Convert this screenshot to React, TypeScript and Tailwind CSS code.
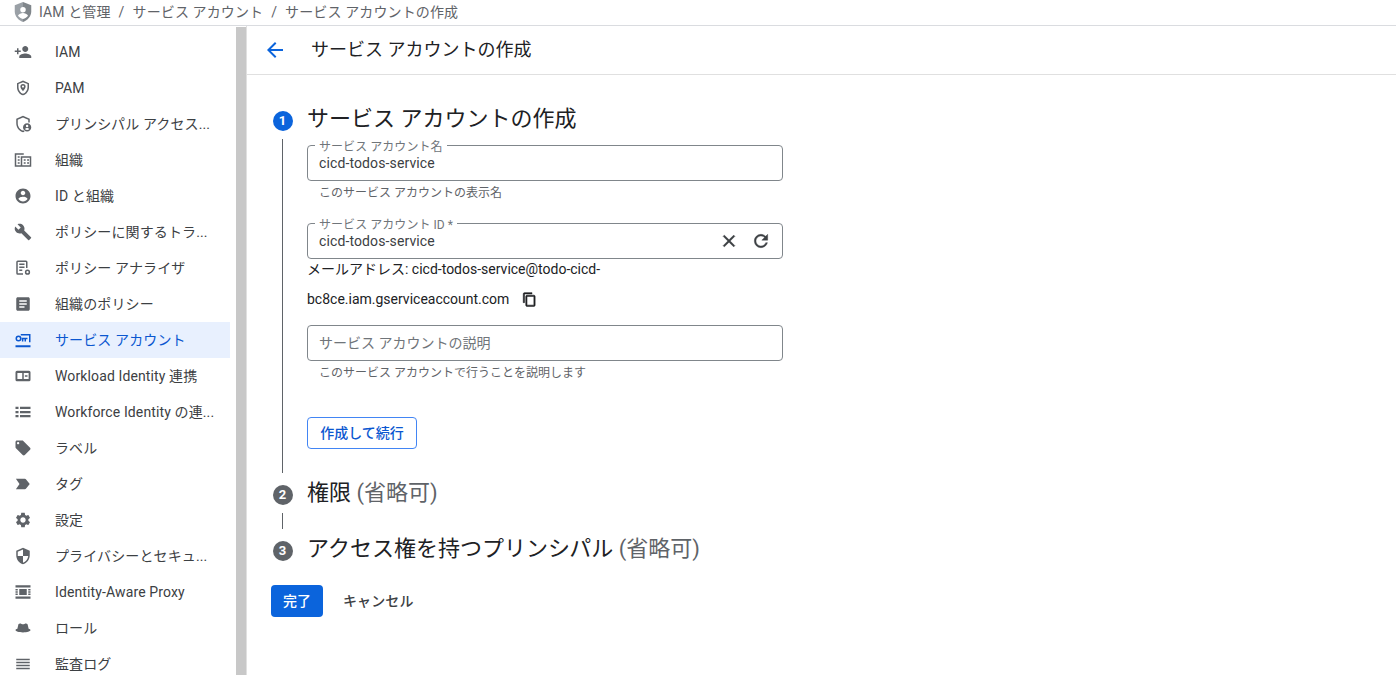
import { ReactNode } from "react"

const P = {
  personAdd: "M15 12c2.21 0 4-1.79 4-4s-1.79-4-4-4-4 1.79-4 4 1.79 4 4 4zm-9-2V7H4v3H1v2h3v3h2v-3h3v-2H6zm9 4c-2.67 0-8 1.34-8 4v2h16v-2c0-2.66-5.33-4-8-4z",
  pam: "M12 2 4 5.500v5.500c0 5 3.400 9.600 8 10.800 4.600-1.200 8-5.800 8-10.800V5.500L12 2zm6 9c0 4-2.600 7.700-6 8.800-3.400-1.100-6-4.800-6-8.800V6.800l6-2.600 6 2.600V11zM12 6.500a3.500 3.500 0 0 0-3.500 3.500c0 2 1.900 4.500 3.500 6.200 1.600-1.700 3.500-4.200 3.500-6.200A3.500 3.500 0 0 0 12 6.500zm0 5a1.400 1.400 0 1 1 0-2.800 1.400 1.400 0 0 1 0 2.800z",
  principal: "M12 1 3 5v6c0 5.550 3.840 10.740 9 12 .7-.17 1.380-.43 2.030-.75l-1-1.850c-.34.160-.68.300-1.030.420-4.020-1.240-7-5.410-7-9.930V6.300l7-3.110 7 3.110V10h2V5l-9-4zm5.500 10a5.500 5.500 0 1 0 0 11 5.500 5.500 0 0 0 0-11zm0 2a1.600 1.600 0 1 1 0 3.200 1.600 1.600 0 0 1 0-3.200zm0 7a4 4 0 0 1-3-1.300c.5-1 2-1.500 3-1.500s2.500.5 3 1.500a4 4 0 0 1-3 1.300z",
  org: "M1 3h12v2H3v14h6V7h14v14H1V3zm10 6v10h10V9H11zm2 2h2.500v2H13v-2zm4.500 0H20v2h-2.500v-2zM13 15h2.500v2H13v-2zm4.500 0H20v2h-2.500v-2zM5 7h2.500v2H5V7zm0 4h2.500v2H5v-2zm0 4h2.500v2H5v-2z",
  account: "M12 2C6.480 2 2 6.480 2 12s4.480 10 10 10 10-4.480 10-10S17.520 2 12 2zm0 3c1.660 0 3 1.340 3 3s-1.340 3-3 3-3-1.340-3-3 1.340-3 3-3zm0 14.200c-2.500 0-4.710-1.280-6-3.220.030-1.990 4-3.080 6-3.080 1.990 0 5.970 1.090 6 3.080-1.290 1.940-3.500 3.220-6 3.220z",
  build: "M22.700 19l-9.100-9.100c.9-2.300.4-5-1.500-6.900-2-2-5-2.400-7.400-1.300L9 6 6 9 1.600 4.700C.4 7.100.9 10.100 2.900 12.100c1.900 1.900 4.600 2.400 6.900 1.500l9.100 9.100c.4.4 1 .4 1.400 0l2.300-2.300c.5-.4.5-1.100.1-1.400z",
  analyzer: "M5 2h11a2 2 0 0 1 2 2v8h-2V4H5v15h7v2H5a2 2 0 0 1-2-2V4a2 2 0 0 1 2-2zm2 4h7v2H7V6zm0 4h7v2H7v-2zm0 4h4v2H7v-2zm11 0a3.500 3.500 0 1 0 0 7 3.500 3.500 0 0 0 0-7zm0 2a1.500 1.500 0 1 1 0 3 1.500 1.500 0 0 1 0-3z",
  article: "M19 3H5c-1.100 0-2 .9-2 2v14c0 1.100.9 2 2 2h14c1.100 0 2-.9 2-2V5c0-1.100-.9-2-2-2zm-5 14H7v-2h7v2zm3-4H7v-2h10v2zm0-4H7V7h10v2z",
  serviceAccount: "M2 19h20v2.500H2V19zM6 6a4 4 0 1 1 0 8 4 4 0 0 1 0-8zm0 2a2 2 0 1 0 0 4 2 2 0 0 0 0-4zm3-4h13v11h-2V6H9V4zm.5 5H18v2h-2v3h-2v-3h-1.500v3h-2v-3h-1V9z",
  workload: "M20 5H4a2 2 0 0 0-2 2v10a2 2 0 0 0 2 2h16a2 2 0 0 0 2-2V7a2 2 0 0 0-2-2zM4.500 8H11v8H4.500V8zm8.500 0h6.500v8H13V8zm1.500 3h3.500v2H14.500v-2z",
  list: "M2 5h4v3H2V5zm6 0h14v3H8V5zM2 10.500h4v3H2v-3zm6 0h14v3H8v-3zM2 16h4v3H2v-3zm6 0h14v3H8v-3z",
  tag: "M21.410 11.580l-9-9C12.050 2.220 11.550 2 11 2H4c-1.100 0-2 .9-2 2v7c0 .55.220 1.050.59 1.420l9 9c.36.36.86.58 1.410.58.55 0 1.050-.22 1.410-.59l7-7c.37-.36.59-.86.59-1.410 0-.55-.23-1.060-.59-1.420zM5.500 7C4.670 7 4 6.330 4 5.500S4.670 4 5.500 4 7 4.670 7 5.500 6.330 7 5.500 7z",
  important: "M2.500 19l12 0c.67 0 1.270-.33 1.630-.84L21 12l-4.870-6.160c-.36-.51-.96-.84-1.630-.84l-12 0L7.340 12 2.500 19z",
  settings: "M19.140 12.940c.04-.3.06-.61.06-.94 0-.32-.02-.64-.07-.94l2.030-1.580c.18-.14.23-.41.12-.61l-1.920-3.320c-.12-.22-.37-.29-.59-.22l-2.390.96c-.5-.38-1.030-.7-1.620-.94l-.36-2.540c-.04-.24-.24-.41-.48-.41h-3.840c-.24 0-.43.17-.47.41l-.36 2.540c-.59.24-1.130.57-1.620.94l-2.390-.96c-.22-.08-.47 0-.59.22L2.740 8.870c-.12.21-.08.47.12.61l2.030 1.580c-.05.3-.09.63-.09.94s.02.64.07.94l-2.030 1.580c-.18.14-.23.41-.12.61l1.920 3.320c.12.22.37.29.59.22l2.390-.96c.5.38 1.030.7 1.620.94l.36 2.540c.05.24.24.41.48.41h3.840c.24 0 .44-.17.47-.41l.36-2.540c.59-.24 1.130-.56 1.620-.94l2.390.96c.22.08.47 0 .59-.22l1.920-3.320c.12-.22.07-.47-.12-.61l-2.010-1.580zM12 15.600c-1.980 0-3.600-1.620-3.600-3.600s1.620-3.600 3.600-3.600 3.600 1.620 3.600 3.600-1.620 3.600-3.600 3.600z",
  security: "M12 1L3 5v6c0 5.550 3.840 10.740 9 12 5.160-1.260 9-6.450 9-12V5l-9-4zm0 10.990h7c-.53 4.120-3.280 7.790-7 8.940V12H5V6.300l7-3.110v8.800z",
  proxy: "M2 3h20v3H2V3zm0 15h20v3H2v-3zM2 8h3v2H2V8zm0 3h3v2H2v-2zm0 3h3v2H2v-2zm17-6h3v2h-3V8zm0 3h3v2h-3v-2zm0 3h3v2h-3v-2zM7 8h10v8H7V8z",
  role: "M8 6c1.500 0 2.500 1 4 1s2.500-1 4-1c1.500 0 2.200 1 2.500 2.500L19.500 13c1.500.4 2.500 1 2.500 1.800C22 16.500 17.500 18 12 18S2 16.500 2 14.800c0-.8 1-1.400 2.500-1.800l1-4.500C5.800 7 6.500 6 8 6z",
  audit: "M3 5h18v2H3V5zm0 4h18v2H3V9zm0 4h18v2H3v-2zm0 4h18v2H3v-2z",
}

const items: { icon: string; label: string; active?: boolean; evenodd?: boolean }[] = [
  { icon: P.personAdd, label: "IAM" },
  { icon: P.pam, label: "PAM", evenodd: true },
  { icon: P.principal, label: "プリンシパル アクセス..." },
  { icon: P.org, label: "組織", evenodd: true },
  { icon: P.account, label: "ID と組織" },
  { icon: P.build, label: "ポリシーに関するトラ..." },
  { icon: P.analyzer, label: "ポリシー アナライザ", evenodd: true },
  { icon: P.article, label: "組織のポリシー" },
  { icon: P.serviceAccount, label: "サービス アカウント", active: true, evenodd: true },
  { icon: P.workload, label: "Workload Identity 連携", evenodd: true },
  { icon: P.list, label: "Workforce Identity の連..." },
  { icon: P.tag, label: "ラベル" },
  { icon: P.important, label: "タグ" },
  { icon: P.settings, label: "設定" },
  { icon: P.security, label: "プライバシーとセキュ..." },
  { icon: P.proxy, label: "Identity-Aware Proxy" },
  { icon: P.role, label: "ロール" },
  { icon: P.audit, label: "監査ログ" },
]

function Icon({ d, className, evenodd }: { d: string; className?: string; evenodd?: boolean }) {
  return (
    <svg viewBox="0 0 24 24" fill="currentColor" className={className}>
      <path d={d} fillRule={evenodd ? "evenodd" : "nonzero"} />
    </svg>
  )
}

function StepDot({ n, active }: { n: number; active?: boolean }) {
  return (
    <div className={`ml-px flex h-5 w-5 shrink-0 items-center justify-center rounded-full text-[13px] font-bold text-white ${active ? "bg-[#0b64dc]" : "bg-[#5f6368]"}`}>
      {n}
    </div>
  )
}

function Field({ label, value, children }: { label: string; value: string; children?: ReactNode }) {
  return (
    <div className="relative flex h-9 w-[476px] items-center rounded border border-[#80868b] px-[11px]">
      <span className="absolute -top-[6px] left-[7px] bg-white px-[4px] text-xs leading-[14px] tracking-[0.05px] text-[#70757a]">{label}</span>
      <span className="mt-[-1px] flex-1 text-sm tracking-[0.12px] text-[#3c4043]">{value}</span>
      {children}
    </div>
  )
}

export default function App() {
  return (
    <div className="flex h-[675px] w-[1396px] flex-col overflow-hidden bg-white font-['Roboto','Noto_Sans_CJK_JP',sans-serif] text-[#202124]">
      <div className="flex h-[26px] shrink-0 items-center border-b border-[#dadce0] pb-px pl-[12px] text-sm tracking-[0.12px] text-[#5f6368]">
        <svg viewBox="0 0 24 24" className="h-[22px] w-[22px]">
          <path fill="#9aa0a6" d="M12 1 3 4.500v7c0 5 3.800 9.700 9 11.500V1z" />
          <path fill="#80868b" d="M12 1l9 3.500v7c0 5-3.800 9.700-9 11.500V1z" />
          <circle cx="12" cy="9.500" r="3" fill="#fff" />
          <path fill="#fff" d="M6.500 16c1-2 3.500-3 5.500-3s4.500 1 5.500 3c-1.200 1.700-3.300 3-5.500 3.500-2.200-.5-4.300-1.800-5.500-3.500z" />
        </svg>
        <div className="ml-[5px] flex items-center gap-2">
          <span>IAM と管理</span>
          <span>/</span>
          <span>サービス アカウント</span>
          <span>/</span>
          <span>サービス アカウントの作成</span>
        </div>
      </div>

      <div className="flex min-h-0 flex-1">
        <div className="flex w-[247px] shrink-0 border-r border-[#e0e0e0]">
          <nav className="w-[230px] shrink-0 overflow-hidden pt-[8px]">
            {items.map((item) => (
              <div
                key={item.label}
                className={`flex h-9 items-center text-sm tracking-[0.12px] ${item.active ? "bg-[#e8f0fe] text-[#0b57d0]" : "text-[#3c4043]"}`}
              >
                <div className="flex w-[55px] shrink-0 pl-[14px]">
                  <Icon d={item.icon} evenodd={item.evenodd} className={`h-[18px] w-[18px] ${item.active ? "text-[#0b57d0]" : "text-[#5f6368]"}`} />
                </div>
                <span className="truncate">{item.label}</span>
              </div>
            ))}
          </nav>
          <div className="ml-[6px] mt-[1px] w-[10px] bg-[#c8c8c8]" />
        </div>

        <main className="flex min-w-0 flex-1 flex-col">
          <div className="flex h-[49px] shrink-0 items-center border-b border-[#e0e0e0] pl-[16px]">
            <Icon d="M20 11H7.830l5.590-5.590L12 4l-8 8 8 8 1.410-1.410L7.830 13H20v-2z" className="h-6 w-6 text-[#0b64dc]" />
            <span className="ml-[24px] text-lg">サービス アカウントの作成</span>
          </div>

          <div className="pl-[25px] pt-[29px]">
            <div className="flex gap-[15px]">
              <div className="flex w-5 flex-col items-center pt-[7px]">
                <StepDot n={1} active />
                <div className="mt-[8px] h-[334px] w-px bg-[#5f6368]" />
              </div>
              <div>
                <h2 className="h-[29px] text-[22px] leading-[29px]">サービス アカウントの作成</h2>
                <div className="mt-[12px]">
                  <Field label="サービス アカウント名" value="cicd-todos-service" />
                  <p className="mt-[4px] h-[16px] pl-[12px] text-xs leading-[16px] text-[#5f6368]">このサービス アカウントの表示名</p>
                </div>
                <div className="mt-[22px]">
                  <Field label="サービス アカウント ID *" value="cicd-todos-service">
                    <div className="flex items-center gap-[12px] pl-px">
                      <Icon d="M19 6.410 17.590 5 12 10.590 6.410 5 5 6.410 10.590 12 5 17.590 6.410 19 12 13.410 17.590 19 19 17.590 13.410 12z" className="h-5 w-5 stroke-current stroke-[0.7] text-[#3c4043]" />
                      <Icon d="M17.650 6.350C16.200 4.900 14.210 4 12 4c-4.420 0-7.990 3.580-7.990 8s3.570 8 7.990 8c3.730 0 6.840-2.550 7.730-6h-2.080c-.82 2.330-3.040 4-5.650 4-3.310 0-6-2.690-6-6s2.690-6 6-6c1.660 0 3.140.69 4.220 1.780L13 11h7V4l-2.350 2.350z" className="h-5 w-5 stroke-current stroke-[0.5] text-[#3c4043]" />
                    </div>
                  </Field>
                  <p className="mt-[1px] h-[18px] text-sm leading-[18px]">メールアドレス: cicd-todos-service@todo-cicd-</p>
                  <div className="mt-[12px] flex h-[18px] items-center text-sm">
                    <span>bc8ce.iam.gserviceaccount.com</span>
                    <Icon d="M16 1H4c-1.100 0-2 .9-2 2v14h2V3h12V1zm3 4H8c-1.100 0-2 .9-2 2v14c0 1.100.9 2 2 2h11c1.100 0 2-.9 2-2V7c0-1.100-.9-2-2-2zm0 16H8V7h11v14z" className="ml-[13px] h-[15px] w-[15px] stroke-current stroke-[0.9] text-[#202124]" />
                  </div>
                </div>
                <div className="mt-[17px]">
                  <div className="flex h-9 w-[476px] items-center rounded border border-[#80868b] px-[11px] text-sm text-[#70757a]">サービス アカウントの説明</div>
                  <p className="mt-[4px] h-[16px] pl-[12px] text-xs leading-[16px] text-[#5f6368]">このサービス アカウントで行うことを説明します</p>
                </div>
                <button className="mt-[36px] flex h-8 w-[110px] items-center justify-center rounded border border-[#4285f4] text-sm font-medium text-[#0b57d0]">作成して続行</button>
              </div>
            </div>

            <div className="mt-[5px] flex items-start gap-[15px]">
              <div className="flex w-5 justify-center pt-[7px]"><StepDot n={2} /></div>
              <h2 className="text-[22px] leading-[29px]">権限 <span className="text-[#5f6368]">(省略可)</span></h2>
            </div>
            <div className="ml-[10px] mt-[6px] h-[16px] w-px bg-[#5f6368]" />
            <div className="mt-[5px] flex items-start gap-[15px]">
              <div className="flex w-5 justify-center pt-[7px]"><StepDot n={3} /></div>
              <h2 className="text-[22px] leading-[29px]">アクセス権を持つプリンシパル <span className="text-[#5f6368]">(省略可)</span></h2>
            </div>
            <div className="-ml-px mt-[22px] flex items-center">
              <button className="h-8 w-[52px] rounded bg-[#0b64dc] text-sm font-medium text-white">完了</button>
              <button className="ml-[20px] mt-[-1px] text-sm font-medium tracking-[0.12px] text-[#3c4043]">キャンセル</button>
            </div>
          </div>
        </main>
      </div>
    </div>
  )
}
